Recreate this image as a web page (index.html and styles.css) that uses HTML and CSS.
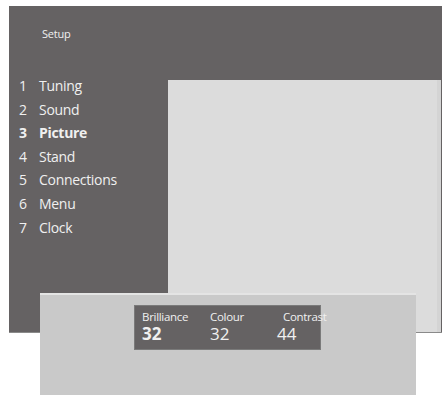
FILE: index.html
```html
<!DOCTYPE html>
<html lang="en">
<head>
    <meta charset="UTF-8">
    <meta name="viewport" content="width=device-width, initial-scale=1.0">
    <title>Setup - Picture</title>
    <link rel="stylesheet" href="styles.css">
</head>
<body>

    <div class="tv-screen">
        <div class="screen-title">Setup</div>
        <div class="screen-body">
            <ul class="setup-menu">
                <li><span class="num">1</span>Tuning</li>
                <li><span class="num">2</span>Sound</li>
                <li class="active"><span class="num">3</span>Picture</li>
                <li><span class="num">4</span>Stand</li>
                <li><span class="num">5</span>Connections</li>
                <li><span class="num">6</span>Menu</li>
                <li><span class="num">7</span>Clock</li>
            </ul>
            <div class="preview-area"></div>
        </div>
    </div>

    <div class="picture-panel">
        <div class="picture-values">
            <div class="value-col">
                <span class="value-label">Brilliance</span>
                <span class="value-num active">32</span>
            </div>
            <div class="value-col">
                <span class="value-label">Colour</span>
                <span class="value-num">32</span>
            </div>
            <div class="value-col contrast">
                <span class="value-label">Contrast</span>
                <span class="value-num">44</span>
            </div>
        </div>
    </div>

</body>
</html>
```

FILE: styles.css
```css
body {
    margin: 0;
    background: #ffffff;
    font-family: 'Open Sans', 'Noto Sans', sans-serif;
    color: #f0f0f0;
    position: relative;
    width: 443px;
    height: 395px;
    overflow: hidden;
}

.tv-screen {
    margin: 6px 0 0 9px;
    width: 433px;
    height: 326px;
    background-color: #656263;
    border-bottom: 1px solid #8a8a8a;
    display: flex;
    flex-direction: column;
}

.screen-title {
    height: 74px;
    padding-left: 33px;
    font-size: 11px;
    line-height: 56px;
    letter-spacing: -0.2px;
}

.screen-body {
    flex: 1;
    display: flex;
}

.setup-menu {
    list-style: none;
    margin: -6px 0 0 0;
    padding: 0 0 0 10px;
    width: 149px;
}

.setup-menu li {
    font-size: 14px;
    line-height: 23.6px;
    letter-spacing: -0.3px;
}

.setup-menu li.active {
    font-weight: bold;
}

.num {
    display: inline-block;
    width: 20px;
}

.preview-area {
    flex: 1;
    margin-right: 1px;
    background-color: #dcdcdc;
    border-right: 4px solid #d4d4d4;
}

/* overlay panel at the bottom */
.picture-panel {
    position: absolute;
    left: 40px;
    top: 293px;
    width: 376px;
    height: 102px;
    background-color: #c9c9c9;
    border-top: 2px solid #e4e4e4;
    box-sizing: border-box;
}

.picture-values {
    margin: 10px 0 0 94px;
    width: 187px;
    height: 45px;
    background-color: #656263;
    border: 1px solid #7a7a7a;
    box-sizing: border-box;
    display: flex;
    padding: 4px 0 0 7px;
}

.value-col {
    display: flex;
    flex-direction: column;
    flex-shrink: 0;
    width: 68px;
}

.value-col + .value-col {
    width: 67px;
}

.value-col.contrast {
    width: auto;
    white-space: nowrap;
}

.value-col.contrast .value-label {
    padding-left: 6px;
}

.value-label {
    font-size: 11.5px;
    line-height: 14px;
    letter-spacing: -0.3px;
}

.value-num {
    font-size: 17px;
    line-height: 19px;
}

.value-num.active {
    font-weight: bold;
}
```
